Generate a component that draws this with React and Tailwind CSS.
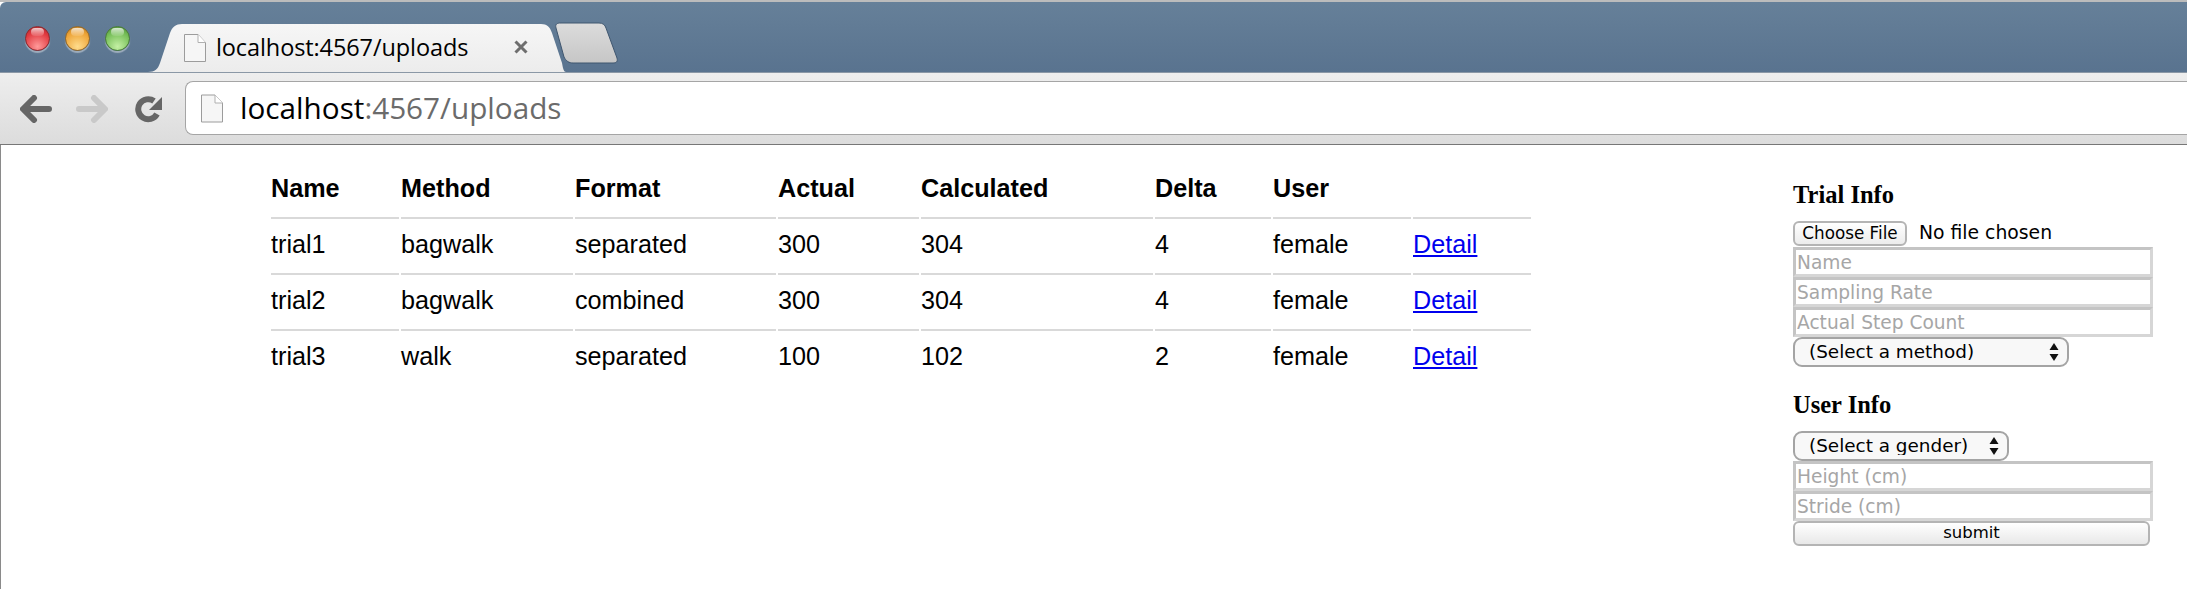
const rows = [
  ['trial1', 'bagwalk', 'separated', '300', '304', '4', 'female'],
  ['trial2', 'bagwalk', 'combined', '300', '304', '4', 'female'],
  ['trial3', 'walk', 'separated', '100', '102', '2', 'female'],
];

const headers = ['Name', 'Method', 'Format', 'Actual', 'Calculated', 'Delta', 'User', ''];
const widths = ['w-[128px]', 'w-[172px]', 'w-[201px]', 'w-[141px]', 'w-[232px]', 'w-[116px]', 'w-[138px]', 'w-[118px]'];

function Light({ className }) {
  return (
    <div className={`relative w-[25px] h-[25px] rounded-full shadow-[0_2px_1px_rgba(255,255,255,0.4)] ${className}`}>
      <div className="absolute left-[5px] top-[1px] w-[13px] h-[8px] rounded-full bg-gradient-to-b from-white/75 to-white/10" />
    </div>
  );
}

function PageIcon({ className }) {
  return (
    <svg className={className} viewBox="0 0 22 28" fill="none">
      <path d="M0.5 0.5H14L21.5 8.5V27.5H0.5Z" fill="#f6f6f6" stroke="#9c9c9c" />
      <path d="M14 0.5V8.5H21.5" fill="#fff" stroke="#b0b0b0" />
    </svg>
  );
}

function Tab() {
  return (
    <div className="relative w-[418px] h-[48px] ml-[18px] flex items-center">
      <svg className="absolute inset-0" width="418" height="48" viewBox="0 0 418 48">
        <defs>
          <linearGradient id="tabFill" x1="0" y1="0" x2="0" y2="1">
            <stop offset="0" stopColor="#f6f6f6" />
            <stop offset="1" stopColor="#ececec" />
          </linearGradient>
        </defs>
        <path d="M0 48C7 48 10 45 12 39L22 9C24 3 28 0 34 0H393C399 0 402 3 404 9L414 39C415 45 416 48 418 48Z" fill="url(#tabFill)" />
      </svg>
      <PageIcon className="relative ml-[36px] w-[22px] h-[28px]" />
      <span className="relative ml-[10px] text-[23.5px] leading-none text-black font-['Open_Sans','DejaVu_Sans',sans-serif] tracking-[-0.1px]">localhost:4567/uploads</span>
      <span className="absolute left-[366px] top-[16px] w-[14px] h-[14px]">
        <svg viewBox="0 0 14 14" className="w-full h-full" stroke="#6e6e6e" strokeWidth="3">
          <path d="M1.5 1.5L12.5 12.5M12.5 1.5L1.5 12.5" />
        </svg>
      </span>
    </div>
  );
}

function NewTab() {
  return (
    <svg className="ml-[-11px] mt-[20px]" width="64" height="42" viewBox="0 0 64 42">
      <defs>
        <linearGradient id="newTabFill" x1="0" y1="0" x2="0" y2="1">
          <stop offset="0" stopColor="#dcdcdc" />
          <stop offset="1" stopColor="#c6c6c6" />
        </linearGradient>
      </defs>
      <path d="M1 6C0 2 2 1 6 1H44C48 1 50 3 51 6L62 36C63 40 61 41 58 41H18C14 41 11 39 9 35Z" fill="url(#newTabFill)" stroke="#3f566f" />
    </svg>
  );
}

function Arrow({ color, flip }) {
  return (
    <svg width="32" height="28" viewBox="0 0 32 28" className={flip ? '-scale-x-100' : ''}>
      <path d="M14 3L3 14L14 25M4 14H29" fill="none" stroke={color} strokeWidth="6" strokeLinecap="round" strokeLinejoin="round" />
    </svg>
  );
}

function Chrome() {
  return (
    <div>
      <div className="h-[2px] bg-[#bcbcbc]" />
      <div className="h-[71px] rounded-tl-[6px] bg-gradient-to-b from-[#668099] to-[#59738f] border-b border-[#8b98a6] flex">
        <div className="flex gap-[15px] pl-[25px] pt-[24px]">
          <Light className="bg-[radial-gradient(circle_at_50%_85%,#ff9a9a,#e0383e_65%,#a5282d)] border border-[#8f2a2e]" />
          <Light className="bg-[radial-gradient(circle_at_50%_85%,#ffdc8c,#eda336_65%,#b57a22)] border border-[#93682a]" />
          <Light className="bg-[radial-gradient(circle_at_50%_85%,#c4f0a4,#74bd56_65%,#4c8a36)] border border-[#4a7c39]" />
        </div>
        <div className="flex items-end">
          <Tab />
          <div className="self-start"><NewTab /></div>
        </div>
      </div>
      <div className="h-[72px] bg-gradient-to-b from-[#eeeeee] to-[#dcdcdc] border-b border-[#777777] flex items-start">
        <div className="flex items-center pl-[20px] pt-[22px] w-[185px]">
          <Arrow color="#666666" />
          <div className="ml-[24px]"><Arrow color="#c9c9c9" flip /></div>
          <svg className="ml-[27px]" width="28" height="28" viewBox="0 0 28 28" fill="none">
            <path d="M22 19A10 10 0 1 1 19 6" stroke="#666666" strokeWidth="6" />
            <path d="M27 2V15H14Z" fill="#666666" />
          </svg>
        </div>
        <div className="flex-1 mt-[8px] h-[54px] bg-white rounded-l-[8px] border border-r-0 border-[#a5a5a5] flex items-center">
          <PageIcon className="ml-[15px] w-[22px] h-[29px]" />
          <span className="ml-[17px] text-[29.7px] leading-none font-['Open_Sans','DejaVu_Sans',sans-serif] text-black">
            localhost<span className="text-[#6b6b6b]">:4567/uploads</span>
          </span>
        </div>
      </div>
    </div>
  );
}

function ResultsTable() {
  return (
    <table className="table-fixed border-separate border-spacing-x-[2px] border-spacing-y-0 w-[1264px] font-['Liberation_Sans',Arial,sans-serif] text-[25.2px] text-black">
      <thead>
        <tr className="h-[56px]">
          {headers.map((h, i) => (
            <th key={i} className={`${widths[i]} p-0 text-left font-bold`}>{h}</th>
          ))}
        </tr>
      </thead>
      <tbody>
        {rows.map((row) => (
          <tr key={row[0]} className="h-[56px]">
            {row.map((cell, i) => (
              <td key={i} className="p-0 pb-[2px] border-t-2 border-[#d9d9d9]">{cell}</td>
            ))}
            <td className="p-0 pb-[2px] border-t-2 border-[#d9d9d9]">
              <a href="#" className="text-[#0000ee] underline">Detail</a>
            </td>
          </tr>
        ))}
      </tbody>
    </table>
  );
}

function TextField({ placeholder }) {
  return (
    <input
      placeholder={placeholder}
      className="block w-[360px] h-[30px] px-[1px] bg-white border-[3px] border-t-[#c4c4c4] border-l-[#c4c4c4] border-r-[#d6d6d6] border-b-[#d6d6d6] outline-none text-[18.6px] leading-none font-['DejaVu_Sans',sans-serif] placeholder:text-[#a6a6a6]"
    />
  );
}

function SelectBox({ label, width }) {
  return (
    <div className={`relative h-[30px] ${width}`}>
      <select className="appearance-none w-full h-full pl-[14px] rounded-[9px] border-2 border-[#a4a4a4] bg-[#f8f8f8] text-[18.4px] leading-none text-black font-['DejaVu_Sans',sans-serif] outline-none">
        <option>{label}</option>
      </select>
      <svg className="absolute right-[10px] top-[6px]" width="10" height="18" viewBox="0 0 10 18" fill="#111111">
        <path d="M5 0L9.5 7H0.5Z" />
        <path d="M5 18L9.5 11H0.5Z" />
      </svg>
    </div>
  );
}

function UploadForm() {
  return (
    <form className="w-[360px] pt-[36px] font-['DejaVu_Sans',sans-serif] text-black">
      <h3 className="font-['Liberation_Serif','Times_New_Roman',serif] font-bold text-[24.5px] leading-[27px]">Trial Info</h3>
      <div className="mt-[12px] h-[27px] flex items-center">
        <button type="button" className="w-[114px] h-[25px] mb-[1px] rounded-[6px] border-2 border-[#b4b4b4] bg-gradient-to-b from-white to-[#ececec] text-[16.8px] leading-none">Choose File</button>
        <span className="ml-[12px] mb-[1px] text-[18.8px] leading-none">No file chosen</span>
      </div>
      <TextField placeholder="Name" />
      <TextField placeholder="Sampling Rate" />
      <TextField placeholder="Actual Step Count" />
      <SelectBox label="(Select a method)" width="w-[276px]" />
      <h3 className="mt-[24px] font-['Liberation_Serif','Times_New_Roman',serif] font-bold text-[24.5px] leading-[27px]">User Info</h3>
      <div className="mt-[13px]"><SelectBox label="(Select a gender)" width="w-[216px]" /></div>
      <TextField placeholder="Height (cm)" />
      <TextField placeholder="Stride (cm)" />
      <button type="button" className="block w-[357px] h-[25px] rounded-[6px] border-2 border-[#b4b4b4] bg-gradient-to-b from-white to-[#e8e8e8] text-[16.5px] leading-none">submit</button>
    </form>
  );
}

export default function App() {
  return (
    <div className="w-[2187px] h-[589px] overflow-hidden bg-white flex flex-col">
      <Chrome />
      <div className="flex-1 flex border-l border-[#8a8a8a]">
        <div className="ml-[268px] pt-[16px]">
          <ResultsTable />
        </div>
        <div className="ml-[260px]">
          <UploadForm />
        </div>
      </div>
    </div>
  );
}
